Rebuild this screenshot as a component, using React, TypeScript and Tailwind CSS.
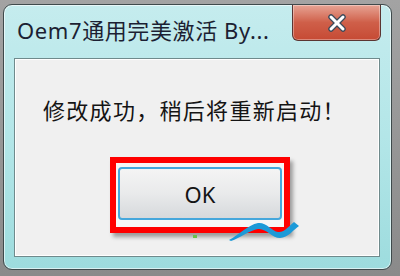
import { X } from "lucide-react";

/* Win7-style message box: "Oem7 activation" finished dialog */

const FONT = { fontFamily: '"Noto Sans", "Noto Sans CJK SC", sans-serif' };

function CloseButton() {
  return (
    <div className="absolute top-0 right-[10px] w-[89px] h-[36px] rounded-b-[6px] border border-t-0 border-[#5b3532] bg-gradient-to-b from-[#e6a394] via-[#cf5f49] to-[#c64a34] shadow-[inset_0_0_0_1px_rgba(255,255,255,0.35)] flex items-center justify-center">
      <X size={24} strokeWidth={5.5} className="text-[#3b4a5a]" />
      <X size={24} strokeWidth={3} className="text-white absolute" />
    </div>
  );
}

function Swoosh() {
  return (
    <svg className="absolute left-[213px] top-[161px]" width="74" height="22" viewBox="0 0 74 22">
      <path
        d="M1 20 C12 14 20 5 30 3 C38 2 44 11 50 12 C56 13 62 5 66 2 L71 6 C66 9 60 18 52 18 C44 18 38 8 30 9 C22 10 12 18 3 21 Z"
        fill="#1c9ad8"
      />
    </svg>
  );
}

export default function App() {
  return (
    <div className="w-[400px] h-[276px] bg-gradient-to-b from-[#a3a3a3] to-[#8a8a8a] pt-[4px] pl-[3px] overflow-hidden" style={FONT}>
      <div className="relative w-[389px] h-[266px] rounded-[9px] border border-[#3f4a4c] bg-gradient-to-b from-[#c5ecee] via-[#b3e6e8] to-[#9ddcde] shadow-[inset_0_0_0_1px_rgba(255,255,255,0.6)] flex flex-col">
        {/* title bar */}
        <div className="h-[53px] flex items-center pl-[13px] pb-[3px]">
          <span className="text-[22px] leading-none text-[#1c1f33] tracking-[0.6px]">Oem7通用完美激活 By...</span>
        </div>
        <CloseButton />

        {/* client area */}
        <div className="relative ml-[10px] w-[366px] h-[199px] border border-[#6f8a8c] bg-[#f0f0f0] shadow-[inset_0_0_0_1px_#ffffff] flex flex-col">
          <p className="mt-[38px] pl-[28px] text-[22px] leading-[26px] tracking-[1.3px] text-[#141414]">修改成功，稍后将重新启动！</p>

          <div className="mt-[34px] ml-[95px] w-[180px] h-[76px] border-[6px] border-[#ff0000] bg-[#f6f6f6] shadow-[3px_4px_4px_rgba(0,0,0,0.35)] pt-[4px] px-[2px] pb-[7px]">
            <div className="w-full h-full rounded-[4px] border-2 border-[#45a7dc] bg-gradient-to-b from-[#f4f4f4] via-[#e9eaeb] to-[#d6d9dc] flex items-center justify-center">
              <span className="text-[22px] leading-none text-[#141414]">OK</span>
            </div>
          </div>
          <div className="absolute left-[178px] top-[176px] w-[4px] h-[3px] bg-[#6cc04a]" />
          <Swoosh />
        </div>
      </div>
    </div>
  );
}
